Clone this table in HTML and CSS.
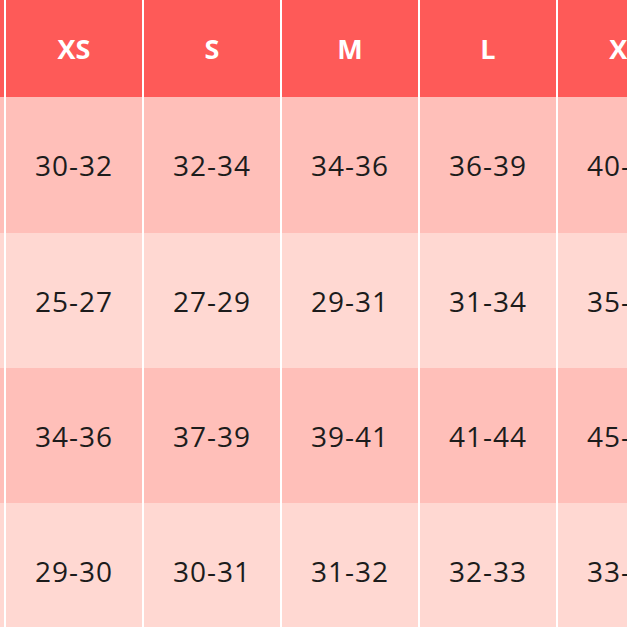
FILE: index.html
```html
<!DOCTYPE html>
<html>
<head>
<meta charset="utf-8">
<link rel="stylesheet" href="styles.css">
</head>
<body>
<div class="chart">
  <div class="cell head edge"></div>
  <div class="cell head">XS</div>
  <div class="cell head">S</div>
  <div class="cell head">M</div>
  <div class="cell head">L</div>
  <div class="cell head">XL</div>

  <div class="cell dark edge"></div>
  <div class="cell dark">30-32</div>
  <div class="cell dark">32-34</div>
  <div class="cell dark">34-36</div>
  <div class="cell dark">36-39</div>
  <div class="cell dark">40-43</div>

  <div class="cell light edge"></div>
  <div class="cell light">25-27</div>
  <div class="cell light">27-29</div>
  <div class="cell light">29-31</div>
  <div class="cell light">31-34</div>
  <div class="cell light">35-38</div>

  <div class="cell dark edge"></div>
  <div class="cell dark">34-36</div>
  <div class="cell dark">37-39</div>
  <div class="cell dark">39-41</div>
  <div class="cell dark">41-44</div>
  <div class="cell dark">45-48</div>

  <div class="cell light edge"></div>
  <div class="cell light">29-30</div>
  <div class="cell light">30-31</div>
  <div class="cell light">31-32</div>
  <div class="cell light">32-33</div>
  <div class="cell light">33-34</div>
</div>
</body>
</html>
```

FILE: styles.css
```css
html, body {
  margin: 0;
  padding: 0;
  width: 627px;
  height: 627px;
  overflow: hidden;
  background: #ffffff;
}

.chart {
  display: grid;
  grid-template-columns: 4px repeat(5, 136px);
  grid-template-rows: 97px 136px 135px 135px 136px;
  column-gap: 2px;
  background: #ffffff;
  width: max-content;
  font-family: "Open Sans", "Noto Sans", sans-serif;
}

.cell {
  display: flex;
  align-items: center;
  justify-content: center;
  font-size: 28px;
  letter-spacing: 1px;
  color: #1c1c1c;
  overflow: hidden;
  white-space: nowrap;
}

.head {
  background: #fe5a58;
  color: #ffffff;
  font-weight: 700;
  letter-spacing: 0;
  font-size: 27px;
}

.dark {
  background: #ffbfb9;
}

.light {
  background: #ffd8d2;
}
```
